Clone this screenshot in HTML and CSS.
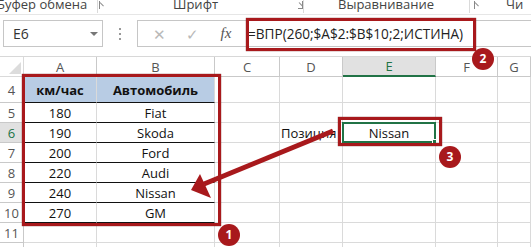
FILE: index.html
```html
<!DOCTYPE html>
<html>
  <head>
    <meta charset="utf-8">
    <title>ВПР</title>
    <link rel="stylesheet" href="styles.css">
  </head>
  <body>
    <div class="page">
      <div class="ribbon">
        <div class="group g-clip"><span>Буфер обмена</span><i class="launch"></i></div>
        <div class="group g-font"><span>Шрифт</span><i class="launch"></i></div>
        <div class="group g-align"><span>Выравнивание</span><i class="launch"></i></div>
        <div class="group g-num"><span>Чи</span></div>
      </div>

      <div class="fbar">
        <div class="namebox"><span>E6</span><i class="drop"></i></div>
        <div class="dots"><b></b><b></b><b></b></div>
        <div class="fbox">
          <span class="btn x">✕</span>
          <span class="btn ok">✓</span>
          <span class="btn fx">fx</span>
          <span class="formula">=ВПР(260;$A$2:$B$10;2;ИСТИНА)</span>
        </div>
      </div>

      <div class="sheet">
        <div class="c corner"></div>
        <div class="c colh">A</div>
        <div class="c colh">B</div>
        <div class="c colh">C</div>
        <div class="c colh">D</div>
        <div class="c colh sel">E</div>
        <div class="c colh">F</div>
        <div class="c colh">G</div>

        <div class="c rowh">4</div>
        <div class="c th">км/час</div>
        <div class="c th">Автомобиль</div>
        <div class="c"></div><div class="c"></div><div class="c"></div><div class="c"></div><div class="c"></div>

        <div class="c rowh">5</div>
        <div class="c td">180</div>
        <div class="c td">Fiat</div>
        <div class="c"></div><div class="c"></div><div class="c"></div><div class="c"></div><div class="c"></div>

        <div class="c rowh sel">6</div>
        <div class="c td">190</div>
        <div class="c td">Skoda</div>
        <div class="c"></div>
        <div class="c label">Позиция</div>
        <div class="c active">Nissan<i class="handle"></i></div>
        <div class="c"></div><div class="c"></div>

        <div class="c rowh">7</div>
        <div class="c td">200</div>
        <div class="c td">Ford</div>
        <div class="c"></div><div class="c"></div><div class="c"></div><div class="c"></div><div class="c"></div>

        <div class="c rowh">8</div>
        <div class="c td">220</div>
        <div class="c td">Audi</div>
        <div class="c"></div><div class="c"></div><div class="c"></div><div class="c"></div><div class="c"></div>

        <div class="c rowh">9</div>
        <div class="c td">240</div>
        <div class="c td">Nissan</div>
        <div class="c"></div><div class="c"></div><div class="c"></div><div class="c"></div><div class="c"></div>

        <div class="c rowh">10</div>
        <div class="c td">270</div>
        <div class="c td">GM</div>
        <div class="c"></div><div class="c"></div><div class="c"></div><div class="c"></div><div class="c"></div>

        <div class="c rowh">11</div>
        <div class="c"></div><div class="c"></div><div class="c"></div><div class="c"></div><div class="c"></div><div class="c"></div><div class="c"></div>

        <div class="c rowh"></div>
        <div class="c"></div><div class="c"></div><div class="c"></div><div class="c"></div><div class="c"></div><div class="c"></div><div class="c"></div>
      </div>

      <!-- callouts over the sheet -->
      <div class="frame f-table"></div>
      <div class="frame f-formula"></div>
      <div class="frame f-cell"></div>

      <svg class="arrow" width="531" height="247" viewBox="0 0 531 247">
        <line x1="333" y1="131" x2="204" y2="184" stroke="#a8191c" stroke-width="5"/>
        <polygon points="191,190 200,174 211,198" fill="#a8191c"/>
      </svg>

      <span class="badge b1">1</span>
      <span class="badge b2">2</span>
      <span class="badge b3">3</span>
    </div>
  </body>
</html>
```

FILE: styles.css
```css
* {
  box-sizing: border-box;
}

body {
  margin: 0;
  background: #fff;
  font-family: "Open Sans", "Liberation Sans", sans-serif;
  color: #222;
}

.page {
  position: relative;
  width: 531px;
  height: 247px;
  overflow: hidden;
}

/* ribbon group labels */
.ribbon {
  display: flex;
  height: 15px;
  border-bottom: 1px solid #e6e6e6;
  font-size: 13px;
  line-height: 13px;
  color: #444;
  white-space: nowrap;
}

.group {
  display: flex;
  align-items: flex-start;
  flex-shrink: 0;
  margin-top: -2px;
  border-right: 1px solid #dadada;
  height: 15px;
}

.g-clip { width: 101px; margin-left: -3px; }
.g-font { width: 206px; padding-left: 75px; }
.g-align { width: 166px; padding-left: 34px; }
.g-num { padding-left: 36px; border-right: none; }

.g-clip span { margin-right: 12px; }
.g-font span { margin-right: 80px; }
.g-align span { margin-right: 40px; }

.launch {
  width: 8px;
  height: 8px;
  margin-top: 3px;
  border-right: 1px solid #888;
  border-bottom: 1px solid #888;
  position: relative;
}

.launch::after {
  content: "";
  position: absolute;
  left: 1px;
  top: 1px;
  width: 5px;
  height: 1px;
  background: #888;
  transform: rotate(45deg);
  transform-origin: left;
}

/* formula bar */
.fbar {
  display: flex;
  align-items: stretch;
  height: 27px;
  margin-top: 5px;
}

.namebox {
  display: flex;
  align-items: center;
  justify-content: space-between;
  width: 100px;
  margin-left: 3px;
  padding: 0 4px 0 9px;
  border: 1px solid #c6c6c6;
  font-size: 14px;
  color: #333;
}

.drop {
  width: 0;
  height: 0;
  border-left: 4px solid transparent;
  border-right: 4px solid transparent;
  border-top: 4px solid #777;
}

.dots {
  display: flex;
  flex-direction: column;
  align-items: center;
  justify-content: center;
  gap: 3px;
  width: 34px;
}

.dots b {
  width: 2px;
  height: 2px;
  background: #999;
}

.fbox {
  display: flex;
  align-items: center;
  flex: 1;
  border: 1px solid #c6c6c6;
  border-right: none;
}

.btn {
  color: #b9b9b9;
  text-align: center;
}

.x { width: 42px; font-size: 15px; }
.ok { width: 25px; font-size: 15px; }
.fx {
  width: 42px;
  font-family: "Liberation Serif", serif;
  font-style: italic;
  font-size: 15px;
  color: #555;
}

.formula {
  padding-left: 1px;
  font-size: 13.6px;
  color: #222;
  white-space: nowrap;
}

/* sheet grid */
.sheet {
  display: grid;
  grid-template-columns: 24px 73px 118px 65px 63px 93px 62px 1fr;
  grid-template-rows: 20px 26px repeat(8, 20px);
  margin-top: 9px;
  border-top: 1px solid #d8d8d8;
  font-size: 13px;
}

.c {
  display: flex;
  align-items: center;
  justify-content: center;
  border-right: 1px solid #dadada;
  border-bottom: 1px solid #dadada;
  white-space: nowrap;
  position: relative;
}

.colh, .rowh {
  font-size: 13px;
  color: #555;
  border-color: #c9c9c9;
}

.corner::after {
  content: "";
  position: absolute;
  right: 2px;
  bottom: 2px;
  border-left: 12px solid transparent;
  border-bottom: 12px solid #dcdcdc;
}

.colh.sel {
  background: #e1e1e1;
  color: #217346;
  border-bottom: 2px solid #217346;
}

.rowh.sel {
  background: #e1e1e1;
  color: #217346;
}

.th {
  background: #b8cce4;
  font-weight: 700;
  color: #111;
  border-bottom: 1px solid #111;
}

.td {
  color: #111;
  border-bottom: 1px solid #111;
}

.label {
  justify-content: flex-start;
  padding-left: 1px;
  color: #111;
}

.active {
  color: #111;
  border: 2px solid #217346;
  margin: -1px 0 0 -1px;
}

.handle {
  position: absolute;
  right: -3px;
  bottom: -3px;
  width: 5px;
  height: 5px;
  background: #217346;
  border: 1px solid #fff;
}

/* red callouts */
.frame {
  position: absolute;
  border: 3px solid #a8191c;
  box-shadow: 0 0 1px #6b0f11;
}

.f-table { left: 22px; top: 74px; width: 199px; height: 152px; }
.f-formula { left: 246px; top: 18px; width: 230px; height: 33px; }
.f-cell { left: 338px; top: 117px; width: 104px; height: 29px; }

.arrow {
  position: absolute;
  left: 0;
  top: 0;
}

.badge {
  position: absolute;
  width: 22px;
  height: 22px;
  border-radius: 50%;
  background: #a8191c;
  color: #fff;
  font-size: 12px;
  font-weight: 700;
  line-height: 22px;
  text-align: center;
}

.b1 { left: 218px; top: 224px; }
.b2 { left: 472px; top: 48px; }
.b3 { left: 439px; top: 146px; }
```
